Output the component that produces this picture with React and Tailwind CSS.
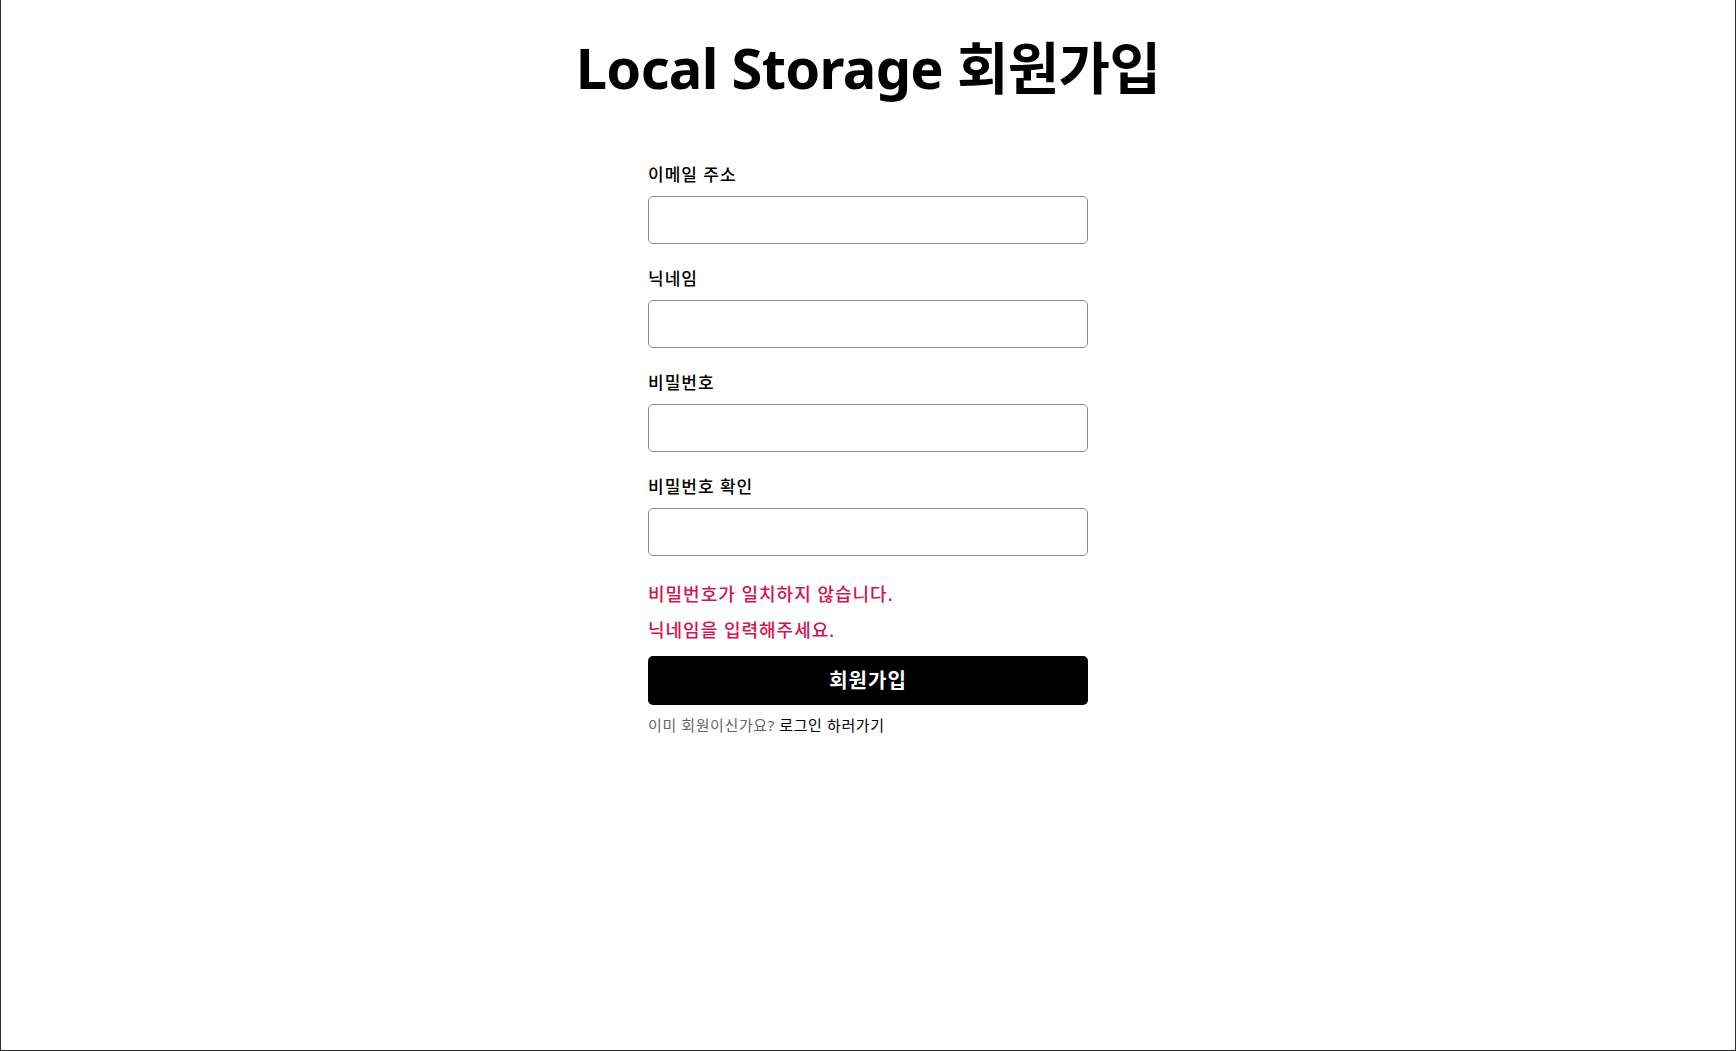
import { useState } from 'react'

const FONT = { fontFamily: '"Noto Sans", "Noto Sans CJK KR", sans-serif' }

export default function App() {
  const [form, setForm] = useState({ email: '', nickname: '', password: '', confirm: '' })

  const fields = [
    { key: 'email', label: '이메일 주소', type: 'email' },
    { key: 'nickname', label: '닉네임', type: 'text' },
    { key: 'password', label: '비밀번호', type: 'password' },
    { key: 'confirm', label: '비밀번호 확인', type: 'password' },
  ]

  return (
    <div className="h-screen w-full bg-white border-l border-r border-b border-[#2a2a2a] text-black" style={FONT}>
      <h1 className="pt-[31px] text-center text-[56px] leading-[72px] font-bold tracking-[-0.7px]">
        Local Storage 회원가입
      </h1>

      <form className="w-[440px] mx-auto mt-[60px]" onSubmit={e => e.preventDefault()}>
        {fields.map(f => (
          <div key={f.key} className="mb-[23px] last:mb-0">
            <label className="block text-[17px] leading-6 mb-[9px] font-medium tracking-[1px]">{f.label}</label>
            <input
              type={f.type}
              value={form[f.key]}
              onChange={e => setForm({ ...form, [f.key]: e.target.value })}
              className="w-full h-[48px] px-3 border border-[#8a8a8a] rounded-[5px] bg-white outline-none"
            />
          </div>
        ))}

        <p className="mt-[26px] text-[18px] leading-6 font-medium tracking-[1px] text-[#d3134f]">비밀번호가 일치하지 않습니다.</p>
        <p className="mt-3 text-[18px] leading-6 font-medium tracking-[1px] text-[#d3134f]">닉네임을 입력해주세요.</p>

        <button className="mt-[14px] w-full h-[49px] bg-black text-white rounded-[5px] text-[20px] font-bold tracking-[1px]">
          회원가입
        </button>

        <p className="mt-[10px] text-[15px] leading-5 tracking-[0.6px]">
          <span className="text-[#666]">이미 회원이신가요? </span>
          <a href="#" className="text-black">로그인 하러가기</a>
        </p>
      </form>
    </div>
  )
}
